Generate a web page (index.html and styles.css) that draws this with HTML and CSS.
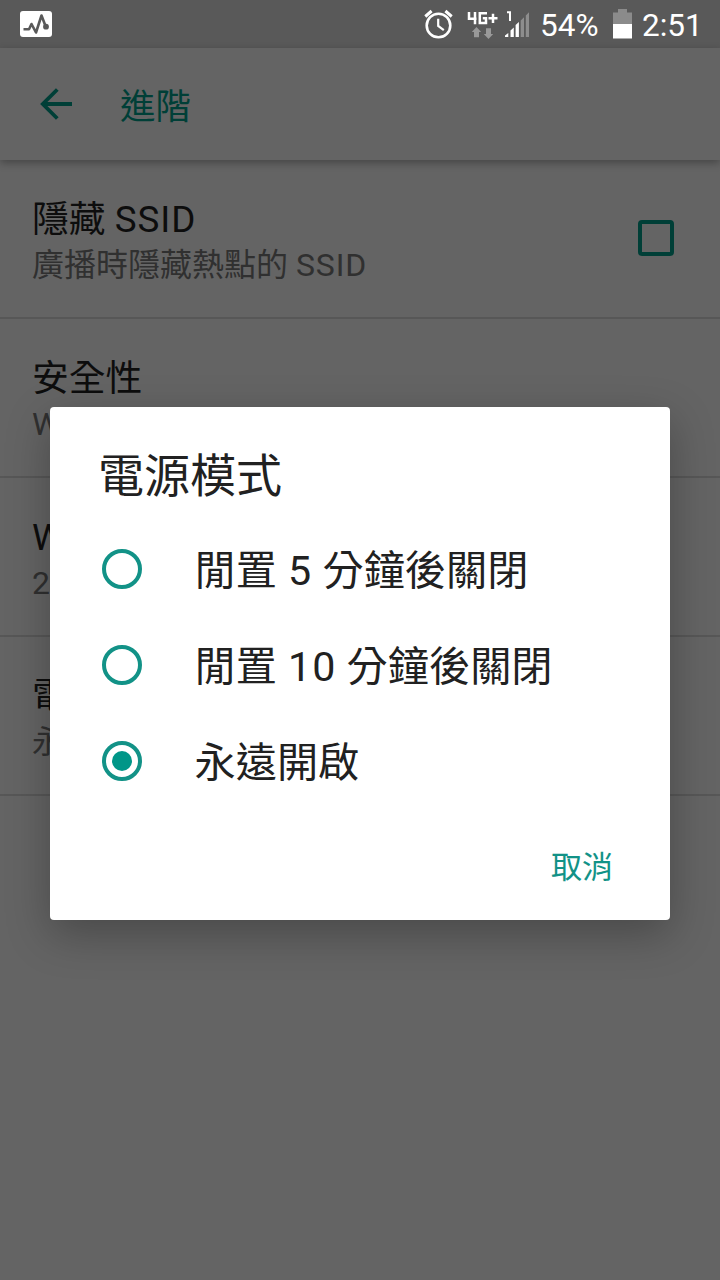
FILE: index.html
```html
<!DOCTYPE html>
<html lang="zh-Hant">
<head>
<meta charset="utf-8">
<title>進階</title>
<link rel="stylesheet" href="styles.css">
</head>
<body>
<div class="screen">
  <header class="status">
    <svg class="status-app" width="32" height="26" viewBox="0 0 32 26">
      <rect width="32" height="26" rx="3" fill="#fff"/>
      <path d="M3.5 18.2H9L11.5 13L16 21.5L21.5 4.5L25.7 15.5" fill="none" stroke="#595959" stroke-width="2.6" stroke-linejoin="round"/>
      <circle cx="26" cy="15.7" r="2.9" fill="#595959"/>
    </svg>
    <div class="status-right">
      <svg class="alarm" width="30" height="30" viewBox="0 0 30 30" fill="none" stroke="#fff">
        <circle cx="14.5" cy="16.5" r="11.8" stroke-width="2.6"/>
        <path d="M1.3 7.5L7.6 2M21.4 2L27.7 7.5" stroke-width="3"/>
        <path d="M14.2 9.7V17L19.8 21.2" stroke-width="2.2"/>
      </svg>
      <svg class="network" width="31" height="30" viewBox="0 0 31 30">
        <path d="M2 3V9.7H9.5M8 3V15.2M20 4.2H12.8V14H19V9.3H15.8M21.5 9.3H30.5M26 4.8V14" fill="none" stroke="#fff" stroke-width="2.5"/>
        <path d="M9.5 18L14.2 23H12V28.2H7V23H4.8ZM21.5 30L26.2 25H24V19.2H19V25H16.8Z" fill="#999"/>
      </svg>
      <svg class="signal" width="25" height="28" viewBox="0 0 25 28">
        <path d="M2 2.3H5V11" fill="none" stroke="#fff" stroke-width="2"/>
        <path d="M0 27V25.5L3.3 23V27ZM5.5 27V20.5L8.8 17.5V27ZM10.6 27V15L13.9 12V27Z" fill="#fff"/>
        <path d="M15.7 27V10.5L19 7.3V27ZM20.8 27V5.4L24 2.3V27Z" fill="#8d8d8d"/>
      </svg>
      <span class="percent">54%</span>
      <svg class="battery" width="19" height="30" viewBox="0 0 19 30">
        <path d="M0 15V3.5H5V0H14V3.5H19V15Z" fill="#8b8b8b"/>
        <path d="M0 15H19V29.5H0Z" fill="#fff"/>
      </svg>
      <span class="clock">2:51</span>
    </div>
  </header>
  <nav class="toolbar">
    <svg class="back" width="32" height="32" viewBox="0 0 32 32" fill="none" stroke="#003f37" stroke-width="3.8">
      <path d="M32 16H3M17.3 1.5L2.8 16L17.3 30.5"/>
    </svg>
    <h1 class="toolbar-title">進階</h1>
  </nav>
  <main class="list">
    <section class="row">
      <div class="row-text">
        <div class="row-title">隱藏 <span class="latin">SSID</span></div>
        <div class="row-summary">廣播時隱藏熱點的 <span class="latin">SSID</span></div>
      </div>
      <span class="checkbox"></span>
    </section>
    <section class="row">
      <div class="row-text">
        <div class="row-title">安全性</div>
        <div class="row-summary">WPA2 PSK</div>
      </div>
    </section>
    <section class="row">
      <div class="row-text">
        <div class="row-title">Wi-Fi</div>
        <div class="row-summary">2.4 GHz</div>
      </div>
    </section>
    <section class="row">
      <div class="row-text">
        <div class="row-title">電源模式</div>
        <div class="row-summary">永遠開啟</div>
      </div>
    </section>
  </main>
  <div class="overlay">
    <div class="dialog">
      <h2 class="dialog-title">電源模式</h2>
      <div class="option"><span class="radio"></span><span class="label">閒置 <span class="digits">5</span> 分鐘後關閉</span></div>
      <div class="option"><span class="radio"></span><span class="label">閒置 <span class="digits">10</span> 分鐘後關閉</span></div>
      <div class="option"><span class="radio radio-on"></span><span class="label">永遠開啟</span></div>
      <div class="actions"><span class="cancel">取消</span></div>
    </div>
  </div>
</div>
</body>
</html>
```
FILE: styles.css
```css
* { box-sizing: border-box; }
body { margin: 0; }
.screen {
  position: relative;
  width: 720px;
  height: 1280px;
  overflow: hidden;
  background: #646464;
  font-family: Roboto, "Noto Sans CJK TC", sans-serif;
}
.status {
  display: flex;
  align-items: center;
  justify-content: space-between;
  height: 48px;
  padding: 0 19px 0 20px;
  background: #595959;
  color: #fff;
}
.status-right { display: flex; align-items: center; }
.network { margin-left: 13px; }
.signal { margin-left: 7px; }
.percent, .clock { font-size: 31.5px; line-height: 48px; padding-top: 4px; }
.percent { width: 60px; margin-left: 10px; }
.battery { margin-left: 13px; }
.clock { width: 59px; margin-left: 10px; }
.toolbar {
  position: relative;
  display: flex;
  align-items: center;
  height: 112px;
  padding-left: 40px;
  background: #646464;
  box-shadow: 0 3px 8px rgba(0, 0, 0, 0.3);
}
.toolbar-title {
  margin: 0 0 0 48px;
  padding-top: 5px;
  color: #003f37;
  font-size: 35.5px;
  font-weight: 400;
  line-height: 44px;
}
.row {
  display: flex;
  justify-content: space-between;
  height: 159px;
  padding: 37px 46px 0 32px;
  border-bottom: 2px solid #575757;
}
.row-title { color: #0d0d0d; font-size: 36.8px; line-height: 46px; white-space: nowrap; }
.row-summary { margin-top: -1px; color: #303030; font-size: 32px; line-height: 46px; white-space: nowrap; }
.latin { letter-spacing: 0.9px; }
.checkbox {
  width: 36px;
  height: 36px;
  margin-top: 23px;
  border: 4px solid #003f37;
  border-radius: 4px;
}
.overlay {
  position: absolute;
  inset: 47px 0 0;
  display: grid;
  place-items: center;
}
.dialog {
  width: 620px;
  height: 513px;
  padding: 40px 50px 0;
  border-radius: 4px;
  background: #fff;
  box-shadow: 0 14px 44px rgba(0, 0, 0, 0.28);
  color: #212121;
}
.dialog-title { margin: 0 0 17.5px -2px; padding-top: 2px; font-size: 46px; font-weight: 400; line-height: 54px; }
.option { display: flex; align-items: center; height: 96px; font-size: 41.2px; line-height: 48px; white-space: nowrap; }
.label { padding-top: 4px; }
.digits { padding-left: 1px; letter-spacing: 1px; }
.radio {
  display: grid;
  place-items: center;
  width: 40px;
  height: 40px;
  margin: 0 52.5px 0 2px;
  border: 4px solid #129287;
  border-radius: 50%;
}
.radio-on::after {
  content: "";
  width: 20px;
  height: 20px;
  border-radius: 50%;
  background: #009688;
}
.actions { display: flex; justify-content: flex-end; padding: 39px 7px 0 0; }
.cancel { color: #129287; font-size: 31px; line-height: 40px; }
```
